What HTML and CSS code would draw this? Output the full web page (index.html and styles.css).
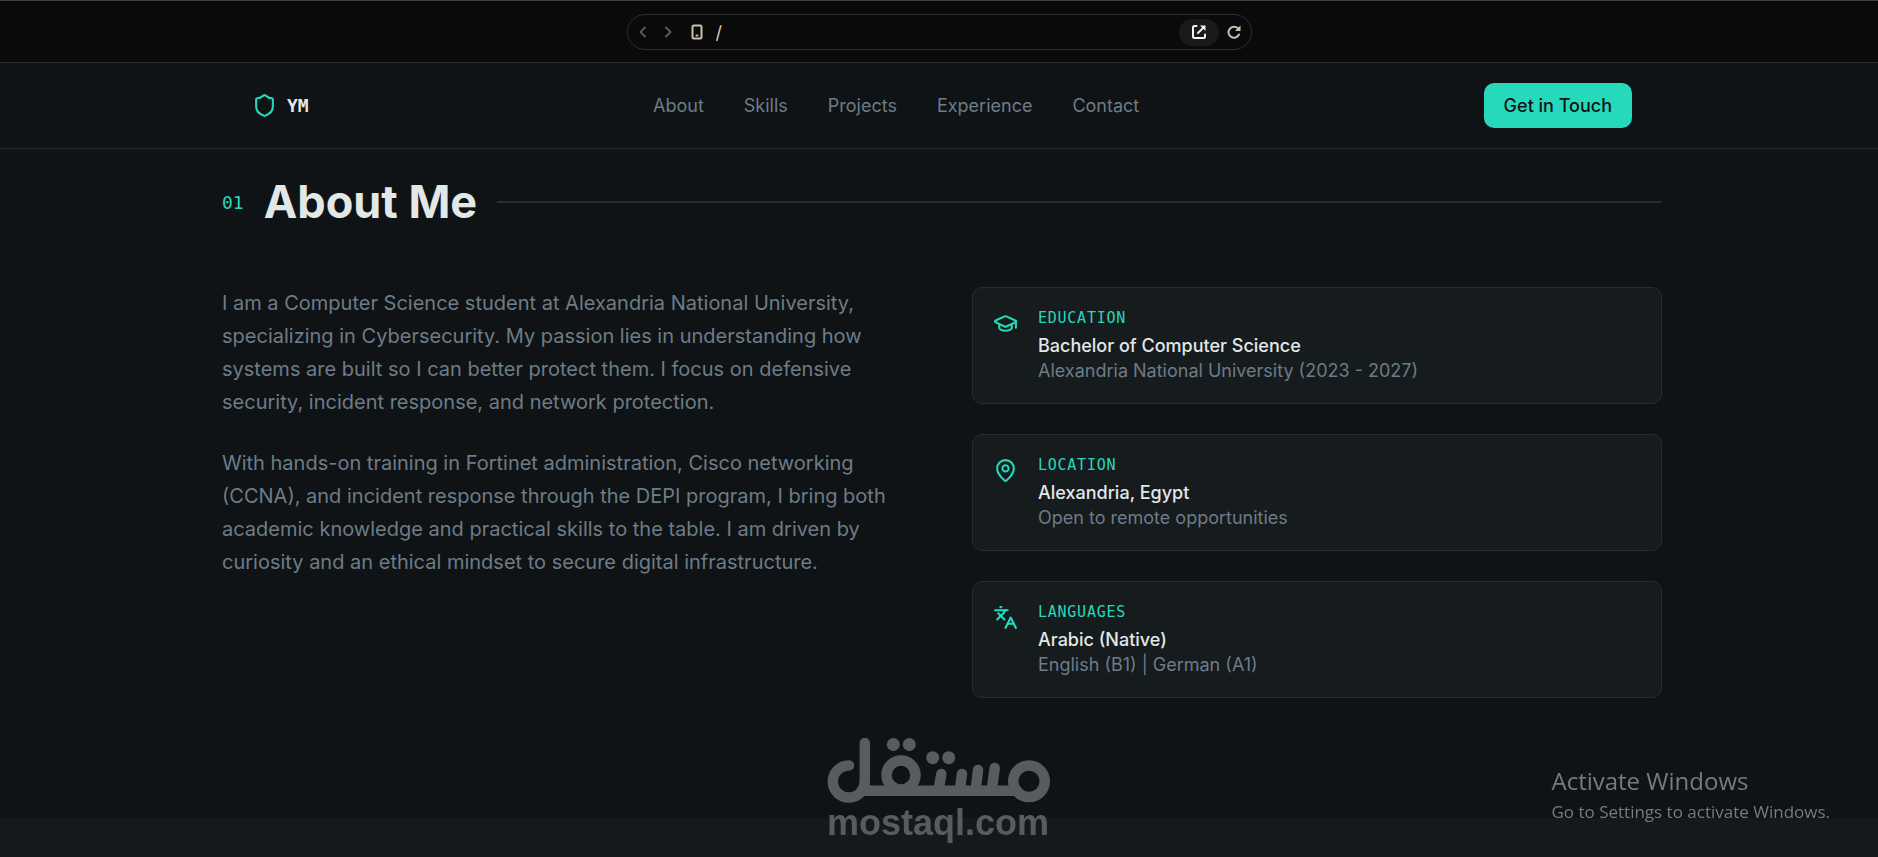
FILE: index.html
```html
<!DOCTYPE html>
<html lang="en">
<head>
    <meta charset="UTF-8">
    <meta name="viewport" content="width=device-width, initial-scale=1.0">
    <title>YM</title>
    <link rel="stylesheet" href="styles.css">
</head>
<body>
    <div class="toolbar">
        <form class="address-bar">
            <button type="button" class="tool dim" aria-label="Back">
                <svg width="18" height="18" viewBox="0 0 18 18"><path d="M11 4.5L6.500 9l4.500 4.500"/></svg>
            </button>
            <button type="button" class="tool dim" aria-label="Forward">
                <svg width="18" height="18" viewBox="0 0 18 18"><path d="M7 4.500L11.500 9L7 13.500"/></svg>
            </button>
            <button type="button" class="tool device" aria-label="Device">
                <svg width="18" height="18" viewBox="0 0 18 18"><rect x="4.500" y="2.500" width="9" height="13" rx="1.500"/><path d="M8.500 12.500h1"/></svg>
            </button>
            <input type="text" class="address" value="/" aria-label="Path">
            <button type="button" class="open" aria-label="Open in new tab">
                <svg width="18" height="18" viewBox="0 0 18 18"><path d="M6.500 3H4.500Q3 3 3 4.500v9Q3 15 4.500 15h9q1.500 0 1.500-1.500V11.500"/><path d="M13.500 4.500L8 10"/><path class="tip" d="M10 2.500h5.500V8z"/></svg>
            </button>
            <button type="button" class="tool" aria-label="Reload">
                <svg width="18" height="18" viewBox="0 0 18 18"><path d="M14 11.500a5.500 5.500 0 1 1-1.100-6.200L14 6.500"/><path class="tip" d="M15.500 2.500V8H10z"/></svg>
            </button>
        </form>
    </div>

    <div class="site">
        <header class="navbar">
            <div class="container nav-inner">
                <a href="#" class="logo">
                    <svg class="icon" viewBox="0 0 24 24"><path d="M20 13c0 5-3.500 7.500-7.660 8.950a1 1 0 0 1-.67-.01C7.500 20.500 4 18 4 13V6a1 1 0 0 1 1-1c2 0 4.500-1.200 6.240-2.720a1.170 1.170 0 0 1 1.520 0C14.510 3.810 17 5 19 5a1 1 0 0 1 1 1z"/></svg>
                    <span>YM</span>
                </a>
                <nav class="nav-links">
                    <a href="#about">About</a>
                    <a href="#skills">Skills</a>
                    <a href="#projects">Projects</a>
                    <a href="#experience">Experience</a>
                    <a href="#contact">Contact</a>
                </nav>
                <button type="button" class="cta">Get in Touch</button>
            </div>
        </header>

        <section class="about" id="about">
            <div class="container">
                <div class="section-title">
                    <span class="number">01</span>
                    <h2>About Me</h2>
                    <div class="line"></div>
                </div>
                <div class="about-grid">
                    <div class="about-text">
                        <p>I am a Computer Science student at Alexandria National University, specializing in Cybersecurity. My passion lies in understanding how systems are built so I can better protect them. I focus on defensive security, incident response, and network protection.</p>
                        <p>With hands-on training in Fortinet administration, Cisco networking (CCNA), and incident response through the DEPI program, I bring both academic knowledge and practical skills to the table. I am driven by curiosity and an ethical mindset to secure digital infrastructure.</p>
                    </div>
                    <div class="cards">
                        <div class="card">
                            <svg class="icon" viewBox="0 0 24 24"><path d="M21.420 10.922a1 1 0 0 0-.019-1.838L12.830 5.180a2 2 0 0 0-1.660 0L2.600 9.080a1 1 0 0 0 0 1.832l8.570 3.908a2 2 0 0 0 1.660 0z"/><path d="M22 10v6"/><path d="M6 12.500V16a6 3 0 0 0 12 0v-3.500"/></svg>
                            <div>
                                <h3>EDUCATION</h3>
                                <p class="card-title">Bachelor of Computer Science</p>
                                <p class="card-sub">Alexandria National University (2023 - 2027)</p>
                            </div>
                        </div>
                        <div class="card">
                            <svg class="icon" viewBox="0 0 24 24"><path d="M20 10c0 4.993-5.539 10.193-7.399 11.799a1 1 0 0 1-1.202 0C9.539 20.193 4 14.993 4 10a8 8 0 0 1 16 0"/><circle cx="12" cy="10" r="3"/></svg>
                            <div>
                                <h3>LOCATION</h3>
                                <p class="card-title">Alexandria, Egypt</p>
                                <p class="card-sub">Open to remote opportunities</p>
                            </div>
                        </div>
                        <div class="card">
                            <svg class="icon" viewBox="0 0 24 24"><path d="m5 8 6 6"/><path d="m4 14 6-6 2-3"/><path d="M2 5h12"/><path d="M7 2h1"/><path d="m22 22-5-10-5 10"/><path d="M14 18h6"/></svg>
                            <div>
                                <h3>LANGUAGES</h3>
                                <p class="card-title">Arabic (Native)</p>
                                <p class="card-sub">English (B1) | German (A1)</p>
                            </div>
                        </div>
                    </div>
                </div>
            </div>
        </section>

        <section class="next" id="skills"></section>
    </div>

    <div class="watermark">
        <svg width="224" height="68" viewBox="0 0 224 68">
            <g class="strokes">
                <path d="M22 27.500A16 16 0 1 0 37.800 43V5"/>
                <path d="M36 52.700H190"/>
                <circle cx="74" cy="37" r="14.500"/>
                <path d="M112 50L114.300 36"/>
                <path d="M133 50L135 36"/>
                <path d="M149 50L151 32"/>
                <path d="M165 50L167.700 30"/>
                <circle cx="202" cy="43.300" r="15.800"/>
            </g>
            <g class="dots">
                <circle cx="66.300" cy="6.500" r="6.500"/>
                <circle cx="82.300" cy="6.500" r="6.500"/>
                <circle cx="105.700" cy="19.700" r="6.500"/>
                <circle cx="121.700" cy="19.700" r="6.500"/>
            </g>
        </svg>
        <span>mostaql.com</span>
    </div>

    <div class="activate">
        <p class="activate-title">Activate Windows</p>
        <p class="activate-text">Go to Settings to activate Windows.</p>
    </div>
</body>
</html>
```
FILE: styles.css
```css
* {
    box-sizing: border-box;
    margin: 0;
    padding: 0;
}
body {
    min-height: 100vh;
    display: flex;
    flex-direction: column;
    background: #0f1315;
    color: #e2e8e8;
    font-family: Inter, sans-serif;
    font-size: 18px;
    line-height: 25px;
}
button {
    border: none;
    background: none;
    color: inherit;
    font: inherit;
    cursor: pointer;
}
a {
    color: inherit;
    text-decoration: none;
}
svg {
    display: block;
    fill: none;
    stroke: currentColor;
    stroke-width: 2;
    stroke-linecap: round;
    stroke-linejoin: round;
}

/* browser toolbar */
.toolbar {
    height: 63px;
    padding-top: 13px;
    background: #0a0a0a;
    border-top: 1px solid #3c424a;
    border-bottom: 1px solid #2b2d2d;
}
.address-bar {
    display: flex;
    align-items: center;
    width: 625px;
    max-width: 100%;
    height: 36px;
    margin: 0 auto;
    padding: 0 6px 0 3px;
    border: 1px solid #2d2e2e;
    border-radius: 18px;
    color: #c9c0b2;
}
.tool {
    padding: 0 2px;
}
.dim {
    padding: 0 4px 0 3px;
    color: #56595c;
}
.device {
    padding: 0 10px 0 7px;
}
.tip {
    fill: currentColor;
    stroke: none;
}
.address {
    flex: 1;
    min-width: 0;
    border: none;
    outline: none;
    background: none;
    color: #d0ccc6;
    font-family: Inter, sans-serif;
    font-size: 18px;
}
.open {
    display: flex;
    align-items: center;
    justify-content: center;
    width: 40px;
    height: 27px;
    margin-right: 4px;
    border-radius: 14px;
    background: #1a191c;
    color: #f4f3ee;
}

/* site, the frame's left gutter is 6px */
.site {
    flex: 1;
    display: flex;
    flex-direction: column;
}
.container {
    max-width: 1440px;
    margin: 0 auto;
}
.navbar,
.about {
    padding-left: 6px;
}
.navbar {
    border-bottom: 1px solid #272c31;
}
.nav-inner {
    display: flex;
    align-items: center;
    justify-content: space-between;
    padding: 20px 30px;
}
.logo {
    display: flex;
    align-items: center;
    gap: 10px;
    font-family: "DejaVu Sans Mono", monospace;
    font-weight: bold;
}
.icon {
    flex: none;
    width: 25px;
    height: 25px;
    color: #26d9bb;
}
.nav-links {
    display: flex;
    gap: 40px;
    color: #6d7c87;
}
.cta {
    height: 45px;
    padding: 0 20px;
    border-radius: 10px;
    background: #26d9bb;
    color: #0f1315;
    font-weight: 500;
}

.about {
    padding-top: 28px;
    padding-bottom: 120px;
}
.section-title {
    display: flex;
    align-items: center;
    gap: 20px;
    margin-bottom: 60px;
}
.number {
    color: #26d9bb;
    font-family: "DejaVu Sans Mono", monospace;
}
h2 {
    font-size: 45px;
    line-height: 50px;
    font-weight: 700;
}
.line {
    flex: 1;
    height: 2px;
    background: #272d34;
}
.about-grid {
    display: grid;
    grid-template-columns: 1fr 1fr;
    gap: 60px;
}
.about-text {
    display: flex;
    flex-direction: column;
    gap: 28px;
    color: #6d7c87;
    font-size: 20px;
    line-height: 33px;
}
.cards {
    display: flex;
    flex-direction: column;
    gap: 30px;
}
.card {
    display: flex;
    gap: 20px;
    padding: 20px;
    border: 1px solid #272c31;
    border-radius: 10px;
    background: #161b1e;
}
.card .icon {
    margin-top: 3px;
}
.card h3 {
    margin-bottom: 5px;
    color: #26d9bb;
    font-family: "DejaVu Sans Mono", monospace;
    font-size: 15px;
    line-height: 20px;
    font-weight: normal;
    letter-spacing: 0.05em;
}
.card-title {
    font-weight: 500;
}
.card-sub {
    color: #6d7c87;
}
.next {
    flex: 1;
    background: #15191d;
}

/* overlays */
.watermark {
    position: fixed;
    left: 50%;
    bottom: 17px;
    transform: translateX(-50%);
    color: #595c5d;
    font-family: "Liberation Sans", Arial, sans-serif;
    font-size: 36px;
    line-height: 34px;
    font-weight: bold;
}
.strokes {
    stroke-width: 10.5;
}
.dots {
    fill: currentColor;
    stroke: none;
}
.activate {
    position: fixed;
    right: 48px;
    bottom: 33px;
    color: #777b7b;
    font-family: "Open Sans", sans-serif;
}
.activate-title {
    margin-bottom: 2px;
    font-size: 24px;
    line-height: 34px;
}
.activate-text {
    font-size: 17px;
    line-height: 24px;
}
```
